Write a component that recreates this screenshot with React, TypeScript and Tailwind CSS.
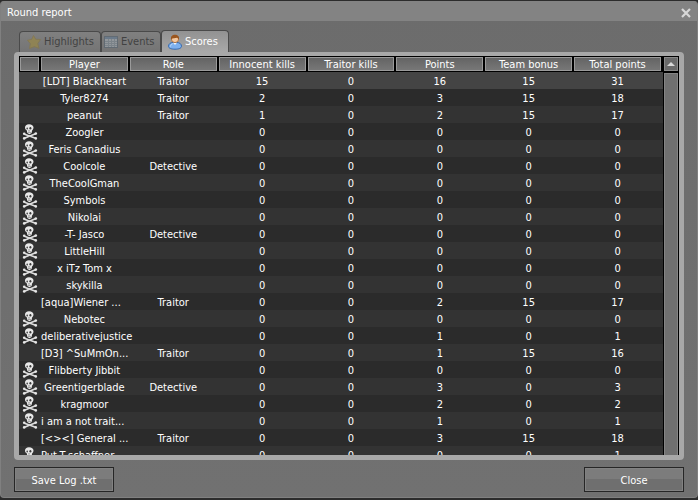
import { clsx } from "clsx";

type Row = {
  player: string;
  role?: string;
  dead?: boolean;
  scores: [number, number, number, number, number];
};

const COLUMNS = [
  "Player",
  "Role",
  "Innocent kills",
  "Traitor kills",
  "Points",
  "Team bonus",
  "Total points",
];

const ROWS: Row[] = [
  { player: "[LDT] Blackheart", role: "Traitor", scores: [15, 0, 16, 15, 31] },
  { player: "Tyler8274", role: "Traitor", scores: [2, 0, 3, 15, 18] },
  { player: "peanut", role: "Traitor", scores: [1, 0, 2, 15, 17] },
  { player: "Zoogler", dead: true, scores: [0, 0, 0, 0, 0] },
  { player: "Feris Canadius", dead: true, scores: [0, 0, 0, 0, 0] },
  { player: "Coolcole", role: "Detective", dead: true, scores: [0, 0, 0, 0, 0] },
  { player: "TheCoolGman", dead: true, scores: [0, 0, 0, 0, 0] },
  { player: "Symbols", dead: true, scores: [0, 0, 0, 0, 0] },
  { player: "Nikolai", dead: true, scores: [0, 0, 0, 0, 0] },
  { player: "-T- Jasco", role: "Detective", dead: true, scores: [0, 0, 0, 0, 0] },
  { player: "LittleHill", dead: true, scores: [0, 0, 0, 0, 0] },
  { player: "x iTz Tom x", dead: true, scores: [0, 0, 0, 0, 0] },
  { player: "skykilla", dead: true, scores: [0, 0, 0, 0, 0] },
  { player: "[aqua]Wiener ...", role: "Traitor", scores: [0, 0, 2, 15, 17] },
  { player: "Nebotec", dead: true, scores: [0, 0, 0, 0, 0] },
  { player: "deliberativejustice", dead: true, scores: [0, 0, 1, 0, 1] },
  { player: "[D3] ^SuMmOn...", role: "Traitor", scores: [0, 0, 1, 15, 16] },
  { player: "Flibberty Jibbit", dead: true, scores: [0, 0, 0, 0, 0] },
  { player: "Greentigerblade", role: "Detective", dead: true, scores: [0, 0, 3, 0, 3] },
  { player: "kragmoor", dead: true, scores: [0, 0, 2, 0, 2] },
  { player: "i am a not trait...", dead: true, scores: [0, 0, 1, 0, 1] },
  { player: "[<><] General ...", role: "Traitor", scores: [0, 0, 3, 15, 18] },
  { player: "Put-T-schaffner...", dead: true, scores: [0, 0, 0, 0, 1] },
];

function SkullIcon() {
  return (
    <svg viewBox="0 0 16 16" className="mx-auto block h-4 w-4" role="img" aria-label="Dead">
      <path d="M2.5 10.2 13.5 14.3M13.5 9.8 2.5 14.3" stroke="#dedede" strokeWidth="1.6" />
      <g fill="#e6e6e6">
        <circle cx="2.2" cy="9.8" r="1.3" />
        <circle cx="13.8" cy="9.6" r="1.3" />
        <circle cx="2.2" cy="14.4" r="1.3" />
        <circle cx="13.8" cy="14.4" r="1.3" />
      </g>
      <path
        d="M7 .3C4.500.3 3 1.700 3 3.600c0 1.300.6 2.200 1.700 2.700l.7 2.700L7.400 10.300 9.600 9l.6-2.700c.8-.6 1.300-1.500 1.300-2.700C11.500 1.600 9.700.3 7 .3Z"
        fill="#e8e8e8"
      />
      <ellipse cx="5.2" cy="4.5" rx="0.8" ry="1.1" fill="#4a4a4a" />
      <ellipse cx="8.4" cy="4.2" rx="1" ry="1.2" fill="#3a3a3a" />
      <path d="M6.500 6.300h1v1.200h-1zM6 8.200h3v.6H6z" fill="#666" />
    </svg>
  );
}

function StarIcon() {
  return (
    <svg viewBox="0 0 16 16" className="h-4 w-4 opacity-80" aria-hidden="true">
      <path
        d="m7.500 1.500 2.200 3.800 4.800.2-2.700 4 1.200 4.800-4.700-1.600-4.800 1.800.8-4.900L1.500 6.300 5.800 5.300Z"
        fill="#95864c"
        stroke="#85784f"
        strokeLinejoin="round"
      />
    </svg>
  );
}

function TableIcon() {
  return (
    <svg viewBox="0 0 16 16" className="h-4 w-4" aria-hidden="true">
      <rect x="1.500" y="2.500" width="13" height="11" fill="#92979b" stroke="#626b73" />
      <path d="M2 3h12v2H2z" fill="#6b7a8a" />
      <path d="M2 7.500h12M2 9.500h12M2 11.500h12M5.500 5v8M8.500 5v8M11.500 5v8" stroke="#7b8389" />
    </svg>
  );
}

function UserIcon() {
  return (
    <svg viewBox="0 0 16 16" className="h-4 w-4" aria-hidden="true">
      <path
        d="M1.5 12.3C1.500 10 3.500 8.500 6 8.500h4c2.500 0 4.500 1.500 4.500 3.800 0 1.900-2.800 2.900-6.500 2.900s-6.500-1-6.500-2.900Z"
        fill="#7db0ee"
        stroke="#3468ad"
      />
      <path d="M3.500 12.500c.2-1.500 1-2.500 2.200-2.800" stroke="#c3defc" fill="none" />
      <path d="M6 8.500 8 11l2-2.500Z" fill="#f0f5fb" />
      <circle cx="8" cy="5" r="3.600" fill="#f5c9a0" stroke="#a5622b" strokeWidth=".8" />
      <path
        d="M4 5.200C3.600 2.300 5.400.7 8 .7s4.500 1.600 4 4.500C11 4.800 10.800 4 10 3.700 8.500 4.400 5.500 3.500 4 5.200Z"
        fill="#9a561f"
      />
    </svg>
  );
}

const TABS = [
  { label: "Highlights", icon: StarIcon, layout: "w-[82px] pl-[6px]" },
  { label: "Events", icon: TableIcon, layout: "w-[60px] pl-px" },
  { label: "Scores", icon: UserIcon, layout: "w-[68px] pl-[5px]" },
];

function Tabs() {
  return (
    <div role="tablist" className="flex h-[22px] items-end px-[5px]">
      {TABS.map(({ label, icon: Icon, layout }) => {
        const active = label === "Scores";
        return (
          <button
            key={label}
            type="button"
            role="tab"
            aria-selected={active}
            className={clsx(
              "flex items-center gap-[2px] whitespace-nowrap rounded-t-[4px] border border-b-0 border-[#4a4a4a]",
              layout,
              active
                ? "h-[22px] bg-linear-to-b from-[#929292] to-[#a8a8a8] text-white"
                : "h-[21px] bg-linear-to-b from-[#808080] to-[#747474] text-[#424242]",
            )}
          >
            <Icon />
            {label}
          </button>
        );
      })}
    </div>
  );
}

function ScoreTable() {
  return (
    <table className="w-full table-fixed border-collapse text-center text-white">
      <colgroup>
        <col className="w-[22px]" />
        {COLUMNS.map((c) => (
          <col key={c} />
        ))}
      </colgroup>
      <thead>
        <tr className="h-4 bg-black">
          {["", ...COLUMNS].map((c) => (
            <th key={c} className="p-0 py-px pr-[2px] font-normal first:pl-px">
              <div className="h-[14px] whitespace-nowrap border border-[#9a9a9a] bg-linear-to-b from-[#646464] to-[#777] leading-[14px]">
                {c}
              </div>
            </th>
          ))}
        </tr>
      </thead>
      <tbody className="leading-[14px]">
        {ROWS.map((row, i) => (
          <tr
            key={row.player}
            className={clsx("h-[17px]", i === 0 ? "bg-[#444]" : i % 2 ? "bg-[#2b2b2b]" : "bg-[#333]")}
          >
            <td className="p-0">{row.dead && <SkullIcon />}</td>
            <td
              className={clsx(
                "whitespace-nowrap p-0 pt-[3px] pr-[2px]",
                row.player.endsWith("...") && "text-left",
              )}
            >
              {row.player}
            </td>
            <td className="p-0 pt-[3px] pr-[2px]">{row.role}</td>
            {row.scores.map((score, n) => (
              <td key={n} className="p-0 pt-[3px] pr-[2px]">
                {score}
              </td>
            ))}
          </tr>
        ))}
      </tbody>
    </table>
  );
}

function ScrollBar() {
  return (
    <div className="flex w-4 shrink-0 flex-col gap-[2px] bg-black px-px pt-px">
      <button
        type="button"
        aria-label="Scroll up"
        className="flex h-[14px] shrink-0 items-center justify-center border border-[#8a8a8a] bg-[#6a6a6a]"
      >
        <svg viewBox="0 0 8 4" className="h-1 w-2" aria-hidden="true">
          <path d="M0 4 4 0l4 4Z" fill="#d8d8d8" />
        </svg>
      </button>
      <div className="flex-1 border border-b-0 border-[#858585] bg-[#707070]" />
    </div>
  );
}

function PanelButton({ children }: { children: string }) {
  return (
    <button
      type="button"
      className="h-[25px] w-[100px] border border-[#262626] bg-linear-to-b from-[#7c7c7c] from-50% to-[#6f6f6f] to-50% pt-[2px] text-white inset-shadow-[0_0_0_1px_#828282]"
    >
      {children}
    </button>
  );
}

export default function App() {
  return (
    <div className="h-screen bg-[#2c2c2c] pt-px pb-[2px] font-['DejaVu_Sans_Condensed','DejaVu_Sans',sans-serif] text-[11px] leading-4">
      <main className="flex h-full flex-col overflow-hidden rounded-[4px] border-x border-b border-[#808080] bg-linear-to-b from-[#6c6c6c] to-[#717171]">
        <header className="flex h-5 shrink-0 items-center justify-between bg-[#838383] px-[6px] pt-[3px] text-white">
          <h1>Round report</h1>
          <button type="button" aria-label="Close window">
            <svg viewBox="0 0 10 10" className="h-[10px] w-[10px]" aria-hidden="true">
              <path d="M1 1 9 9M9 1 1 9" stroke="#d8d8d8" strokeWidth="2.200" />
            </svg>
          </button>
        </header>
        <div className="flex min-h-0 flex-1 flex-col px-[13px] pt-[9px] pb-[5px]">
          <Tabs />
          <section className="flex min-h-0 flex-1 overflow-hidden rounded-[4px] border-[5px] border-t-4 border-[#a8a8a8] bg-[#2b2b2b]">
            <div className="min-w-0 flex-1 overflow-hidden">
              <ScoreTable />
            </div>
            <ScrollBar />
          </section>
          <footer className="flex justify-between pt-[7px]">
            <PanelButton>Save Log .txt</PanelButton>
            <PanelButton>Close</PanelButton>
          </footer>
        </div>
      </main>
    </div>
  );
}
